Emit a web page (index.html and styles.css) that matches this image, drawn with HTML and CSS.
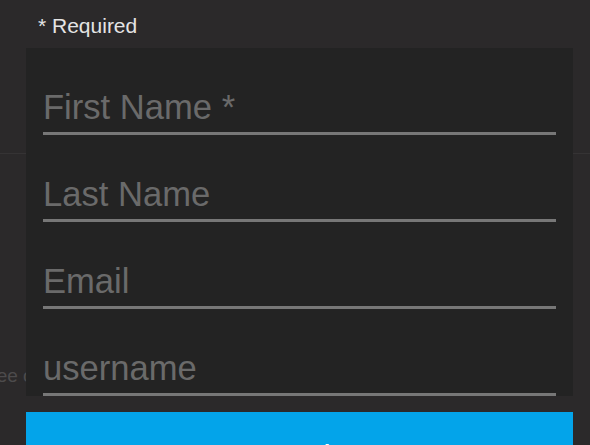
FILE: index.html
```html
<!DOCTYPE html>
<html lang="en">

<head>
    <meta charset="UTF-8">
    <meta name="viewport" content="width=device-width, initial-scale=1.0">
    <title>Sign up</title>
    <link rel="stylesheet" href="styles.css">
</head>

<body>
    <div class="backdrop">
        <div class="backdrop-head"></div>
        <p class="backdrop-text">See our terms</p>
    </div>

    <div class="modal">
        <p class="required">* Required</p>
        <form class="form">
            <input type="text" class="field" placeholder="First Name *">
            <input type="text" class="field" placeholder="Last Name">
            <input type="email" class="field" placeholder="Email">
            <input type="text" class="field" placeholder="username">
        </form>
        <button class="submit">Create Shop</button>
    </div>
</body>

</html>
```

FILE: styles.css
```css
*,
::before,
::after {
    box-sizing: border-box;
    margin: 0;
    padding: 0;
}

body {
    background: #2b292a;
    font-family: "Liberation Sans", Arial, sans-serif;
    overflow: hidden;
}

.backdrop-head {
    height: 154px;
    border-bottom: 1px solid #353334;
}

.backdrop-text {
    margin-top: 210px;
    margin-left: -16px;
    font-size: 19px;
    line-height: 24px;
    color: #4d4b4c;
}

.modal {
    position: absolute;
    top: 0;
    left: 26px;
    width: 547px;
}

.required {
    height: 48px;
    padding: 14px 0 0 12px;
    font-size: 21px;
    line-height: 24px;
    color: #e4e4e4;
}

.form {
    background: #232323;
    padding: 35px 17px 0;
    display: flex;
    flex-direction: column;
    gap: 35px;
}

.field {
    display: block;
    width: 100%;
    height: 52px;
    padding: 0;
    border: none;
    border-bottom: 3px solid #777;
    background: transparent;
    outline: none;
    font-family: "Liberation Sans", Arial, sans-serif;
    font-size: 34.6px;
    color: #ccc;
}

.field::placeholder {
    color: #6a6a6a;
}

.submit {
    display: block;
    width: 100%;
    height: 82px;
    margin-top: 16px;
    border: none;
    background: #03a4ea;
    color: #fff;
    font-family: "Liberation Sans", Arial, sans-serif;
    font-size: 22px;
    font-weight: bold;
    line-height: 26px;
}
```
